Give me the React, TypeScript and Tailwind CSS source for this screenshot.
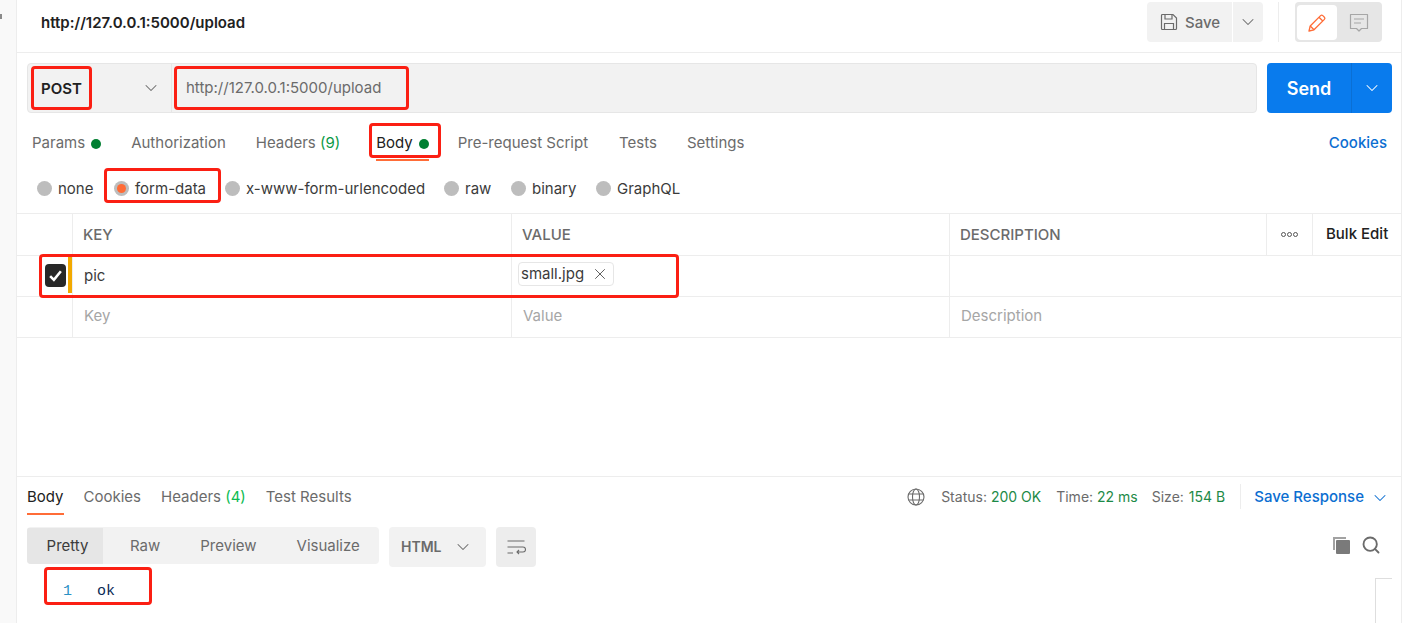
import { ChevronDown, Search, X } from "lucide-react";

const Dot = () => <span className="ml-[6px] w-[10px] h-[10px] rounded-full bg-[#007f31]" />;

const Chevron = ({ className }: { className: string }) => <ChevronDown className={className} strokeWidth={1.25} />;

const RedBox = ({ className }: { className: string }) => (
  <div className={`absolute border-[3px] border-[#fb1f13] rounded-[4px] ${className}`} />
);

const Radio = ({ label, active, className }: { label: string; active?: boolean; className: string }) => (
  <div className={`flex items-center ${className}`}>
    <span className="w-[15px] h-[15px] rounded-full bg-[#bdbdbd] flex items-center justify-center">
      {active && <span className="w-[9px] h-[9px] rounded-full bg-[#ff6c37]" />}
    </span>
    <span className="ml-[6px] pt-[1px] text-[#3b3b3b]">{label}</span>
  </div>
);

const TableRow = ({ children, className }: { children: React.ReactNode; className: string }) => (
  <div className={`flex border-b border-[#ededed] ${className}`}>{children}</div>
);

export default function App() {
  return (
    <div className="relative flex w-[1411px] h-[623px] overflow-hidden bg-white text-[15px] font-['Inter',sans-serif] text-[#6b6b6b]">
      <div className="w-[17px] shrink-0 bg-[#f9f9f9] border-r border-[#ededed]">
        <div className="mt-[14px] w-[2px] h-[5px] bg-[#8a8a8a]" />
      </div>

      <div className="w-[1385px] shrink-0 border-r border-[#ededed] flex flex-col">
        {/* top bar */}
        <div className="h-[53px] shrink-0 border-b border-[#ededed] flex items-center pl-[24px] pr-[19px] pb-[8px]">
          <span className="pt-[2px] font-semibold text-[#212121]">http://127.0.0.1:5000/upload</span>
          <div className="ml-auto flex items-center h-[40px]">
            <div className="w-[85px] h-[40px] bg-[#f2f2f2] rounded-l-[4px] flex items-center pl-[13px] text-[#6b6b6b] font-medium">
              <svg width="18" height="18" viewBox="0 0 18 18" fill="none" stroke="#6b6b6b" strokeWidth="1.2">
                <path d="M1.5 2.5a1 1 0 0 1 1-1h10.5l3.5 3.5v10.5a1 1 0 0 1-1 1h-13a1 1 0 0 1-1-1z" />
                <path d="M5 1.5v4.5h7V1.5M4.5 16.5V10.5h9v6" />
              </svg>
              <span className="ml-[7px] pt-[2px]">Save</span>
            </div>
            <div className="ml-px w-[30px] h-[40px] bg-[#f2f2f2] rounded-r-[4px] flex items-center justify-center">
              <Chevron className="w-[20px] h-[20px] text-[#6b6b6b]" />
            </div>
            <div className="ml-[15px] w-px h-[40px] bg-[#ededed]" />
            <div className="ml-[16px] w-[87px] h-[40px] bg-[#e6e6e6] rounded-[4px] flex items-center p-[2px] pt-[3px]">
              <div className="w-[40px] h-[35px] bg-white rounded-[4px] flex items-center justify-center">
                <svg width="20" height="20" viewBox="0 0 20 20" fill="none" stroke="#ff6c37" strokeWidth="1.3" strokeLinejoin="round">
                  <path d="M2 18l1.2-5L13.6 2.6a1.6 1.6 0 0 1 2.2 0l1.6 1.6a1.6 1.6 0 0 1 0 2.2L7 16.8z" />
                  <path d="M12 4.2l3.8 3.8M3.2 13l3.8 3.8" />
                </svg>
              </div>
              <div className="flex-1 flex items-center justify-center">
                <svg width="20" height="20" viewBox="0 0 20 20" fill="none" stroke="#a6a6a6" strokeWidth="1.2" strokeLinejoin="round">
                  <path d="M1.5 1.5h17v14h-6l-2.5 2.5-2.500-2.500h-6z" />
                  <path d="M5 6h10M5 10h7" />
                </svg>
              </div>
            </div>
          </div>
        </div>

        {/* request line */}
        <div className="h-[60px] shrink-0 pt-[10px] pl-[10px] flex">
          <div className="w-[1230px] h-[50px] bg-[#f2f2f2] border border-[#e6e6e6] rounded-[4px] flex items-center">
            <div className="w-[144px] h-full border-r border-[#e6e6e6] flex items-center pl-[13px] pr-[10px] justify-between">
              <span className="pt-[2px] font-semibold text-[#212121]">POST</span>
              <Chevron className="w-[20px] h-[20px] text-[#6b6b6b]" />
            </div>
            <span className="ml-[14px] text-[#6b6b6b]">http://127.0.0.1:5000/upload</span>
          </div>
          <div className="ml-[10px] w-[125px] h-[50px] bg-[#097bed] rounded-[4px] flex text-white">
            <div className="w-[85px] border-r border-[#0a6fd4] flex items-center justify-center text-[18px] font-semibold">Send</div>
            <div className="flex-1 flex items-center justify-center">
              <Chevron className="w-[20px] h-[20px]" />
            </div>
          </div>
        </div>

        {/* request tabs */}
        <div className="h-[60px] shrink-0 flex items-center pl-[15px] pr-[14px] pt-[1px]">
          <div className="flex items-center"><span>Params</span><Dot /></div>
          <span className="ml-[30px]">Authorization</span>
          <span className="ml-[30px]">Headers <span className="text-[#0a9a46]">(9)</span></span>
          <div className="relative ml-[36px] flex items-center text-[#212121]">
            <span>Body</span><Dot />
            <div className="absolute left-0 right-0 top-[27px] h-[2px] bg-[#ff6c37]" />
          </div>
          <span className="ml-[29px]">Pre-request Script</span>
          <span className="ml-[31px]">Tests</span>
          <span className="ml-[30px]">Settings</span>
          <span className="ml-auto text-[#0b6ed1] font-medium">Cookies</span>
        </div>

        {/* body types */}
        <div className="h-[30px] shrink-0 flex items-center pl-[20px] pt-[1px]">
          <Radio label="none" className="w-[77px]" />
          <Radio label="form-data" active className="w-[111px]" />
          <Radio label="x-www-form-urlencoded" className="w-[219px]" />
          <Radio label="raw" className="w-[67px]" />
          <Radio label="binary" className="w-[85px]" />
          <Radio label="GraphQL" className="w-[90px]" />
        </div>

        {/* table */}
        <div className="mt-[10px] border-t border-[#ededed] flex flex-col">
          <TableRow className="h-[42px] font-medium">
            <div className="w-[56px] border-r border-[#ededed]" />
            <div className="w-[439px] border-r border-[#ededed] flex items-center pl-[10px] pt-[2px]">KEY</div>
            <div className="w-[438px] border-r border-[#ededed] flex items-center pl-[10px] pt-[2px]">VALUE</div>
            <div className="w-[317px] border-r border-[#ededed] flex items-center pl-[10px] pt-[2px]">DESCRIPTION</div>
            <div className="w-[46px] border-r border-[#ededed] flex items-center justify-center gap-[1px]">
              <span className="w-[5px] h-[5px] rounded-full border border-[#555]" />
              <span className="w-[5px] h-[5px] rounded-full border border-[#555]" />
              <span className="w-[5px] h-[5px] rounded-full border border-[#555]" />
            </div>
            <div className="flex-1 flex items-center pl-[13px] text-[#212121]">Bulk Edit</div>
          </TableRow>
          <TableRow className="h-[41px]">
            <div className="w-[56px] border-r border-[#ededed] flex items-center pl-[28px] pb-[1px] relative">
              <span className="w-[21px] h-[23px] rounded-[4px] bg-[#282828] flex items-center justify-center">
                <svg width="15" height="15" viewBox="0 0 14 14" fill="none" stroke="white" strokeWidth="2.4">
                  <path d="M2 7.500l3.500 3.500L12 3" />
                </svg>
              </span>
              <span className="absolute right-0 top-[1px] bottom-[3px] w-[4px] bg-[#f2a900]" />
            </div>
            <div className="w-[439px] border-r border-[#ededed] flex items-center pl-[11px] text-[#3b3b3b]">pic</div>
            <div className="w-[438px] border-r border-[#ededed] flex items-center pl-[6px] pb-[4px]">
              <div className="h-[24px] w-[96px] border border-[#e6e6e6] rounded-[4px] flex items-center pl-[2px] text-[#3b3b3b]">
                small.jpg
                <X className="ml-auto mr-[4px] w-[18px] h-[18px] text-[#555]" strokeWidth={1.25} />
              </div>
            </div>
            <div className="flex-1" />
          </TableRow>
          <TableRow className="h-[41px] text-[#a6a6a6]">
            <div className="w-[56px] border-r border-[#ededed]" />
            <div className="w-[439px] border-r border-[#ededed] flex items-center pl-[11px] pb-[2px]">Key</div>
            <div className="w-[438px] border-r border-[#ededed] flex items-center pl-[11px] pb-[2px]">Value</div>
            <div className="flex-1 flex items-center pl-[11px] pb-[2px]">Description</div>
          </TableRow>
        </div>

        {/* response */}
        <div className="mt-[138px] border-t border-[#ededed] flex-1 flex flex-col">
          <div className="h-[41px] flex items-center pl-[10px] pr-[11px]">
            <div className="relative text-[#212121]">
              Body
              <div className="absolute left-0 right-0 top-[27px] h-[2px] bg-[#ff6c37]" />
            </div>
            <span className="ml-[20px]">Cookies</span>
            <span className="ml-[20px]">Headers <span className="text-[#0cbb52]">(4)</span></span>
            <span className="ml-[20px]">Test Results</span>
            <div className="ml-auto flex items-center text-[14px] pb-[2px]">
              <svg width="18" height="18" viewBox="0 0 18 18" fill="none" stroke="#6b6b6b" strokeWidth="1.1">
                <circle cx="9" cy="9" r="8" />
                <ellipse cx="9" cy="9" rx="3.500" ry="8" />
                <path d="M1.500 6h15M1.500 12h15" />
              </svg>
              <span className="ml-[16px]">Status:</span>
              <span className="ml-[4px] text-[#1d8a47]">200 OK</span>
              <span className="ml-[15px]">Time:</span>
              <span className="ml-[4px] text-[#1d8a47]">22 ms</span>
              <span className="ml-[14px]">Size:</span>
              <span className="ml-[5px] text-[#1d8a47]">154 B</span>
              <div className="ml-[15px] w-px h-[25px] bg-[#ededed]" />
              <span className="ml-[13px] pt-[2px] text-[15px] font-medium text-[#0b6ed1]">Save Response</span>
              <Chevron className="ml-[6px] mt-[2px] w-[20px] h-[20px] text-[#0b6ed1]" />
            </div>
          </div>

          <div className="mt-[9px] h-[40px] flex items-start pl-[10px] pr-[20px]">
            <div className="h-[37px] w-[352px] bg-[#f2f2f2] rounded-[4px] flex items-center overflow-hidden pt-[1px]">
              <div className="w-[76px] h-[37px] bg-[#e6e6e6] flex items-center justify-center pl-[5px] text-[#3b3b3b]">Pretty</div>
              <span className="ml-[27px]">Raw</span>
              <span className="ml-[40px]">Preview</span>
              <span className="ml-[40px]">Visualize</span>
            </div>
            <div className="ml-[10px] w-[97px] h-[40px] bg-[#f2f2f2] rounded-[4px] flex items-center pl-[12px] pb-[1px] font-semibold text-[14px]">
              HTML
              <Chevron className="ml-auto mr-[13px] w-[20px] h-[20px] text-[#6b6b6b]" />
            </div>
            <div className="ml-[10px] w-[40px] h-[40px] bg-[#ededed] rounded-[4px] flex items-center justify-center">
              <svg width="20" height="20" viewBox="0 0 20 20" fill="none" stroke="#6b6b6b" strokeWidth="1.1">
                <path d="M1.500 4h17M1.500 10h15.500a2.500 2.500 0 0 1 0 5H11M13 13l-2 2 2 2M1.500 16H7" />
              </svg>
            </div>
            <div className="ml-auto flex items-center h-[36px] gap-[10px]">
              <svg width="19" height="19" viewBox="0 0 19 19" fill="#7a7a7a">
                <path d="M1 1h13v2H3v11H1z" fillOpacity="0.7" />
                <rect x="4" y="4" width="14" height="14" rx="1" />
              </svg>
              <Search className="w-[20px] h-[20px] text-[#6b6b6b]" strokeWidth={2.25} />
            </div>
          </div>

          <div className="relative flex-1 font-['Liberation_Mono',monospace] text-[15px]">
            <span className="absolute left-[46px] top-[14px] text-[#2b91c4]">1</span>
            <span className="absolute left-[80px] top-[14px] text-[#0a2a55]">ok</span>
            <div className="absolute left-[1358px] top-[11px] w-[17px] h-[60px] border-l border-t border-[#dedede]" />
          </div>
        </div>
      </div>

      {/* red annotation boxes */}
      <RedBox className="left-[31px] top-[66px] w-[61px] h-[44px]" />
      <RedBox className="left-[174px] top-[66px] w-[235px] h-[44px]" />
      <RedBox className="left-[369px] top-[123px] w-[72px] h-[35px]" />
      <RedBox className="left-[104px] top-[168px] w-[117px] h-[35px]" />
      <RedBox className="left-[39px] top-[254px] w-[640px] h-[44px]" />
      <RedBox className="left-[44px] top-[567px] w-[108px] h-[38px]" />
    </div>
  );
}
